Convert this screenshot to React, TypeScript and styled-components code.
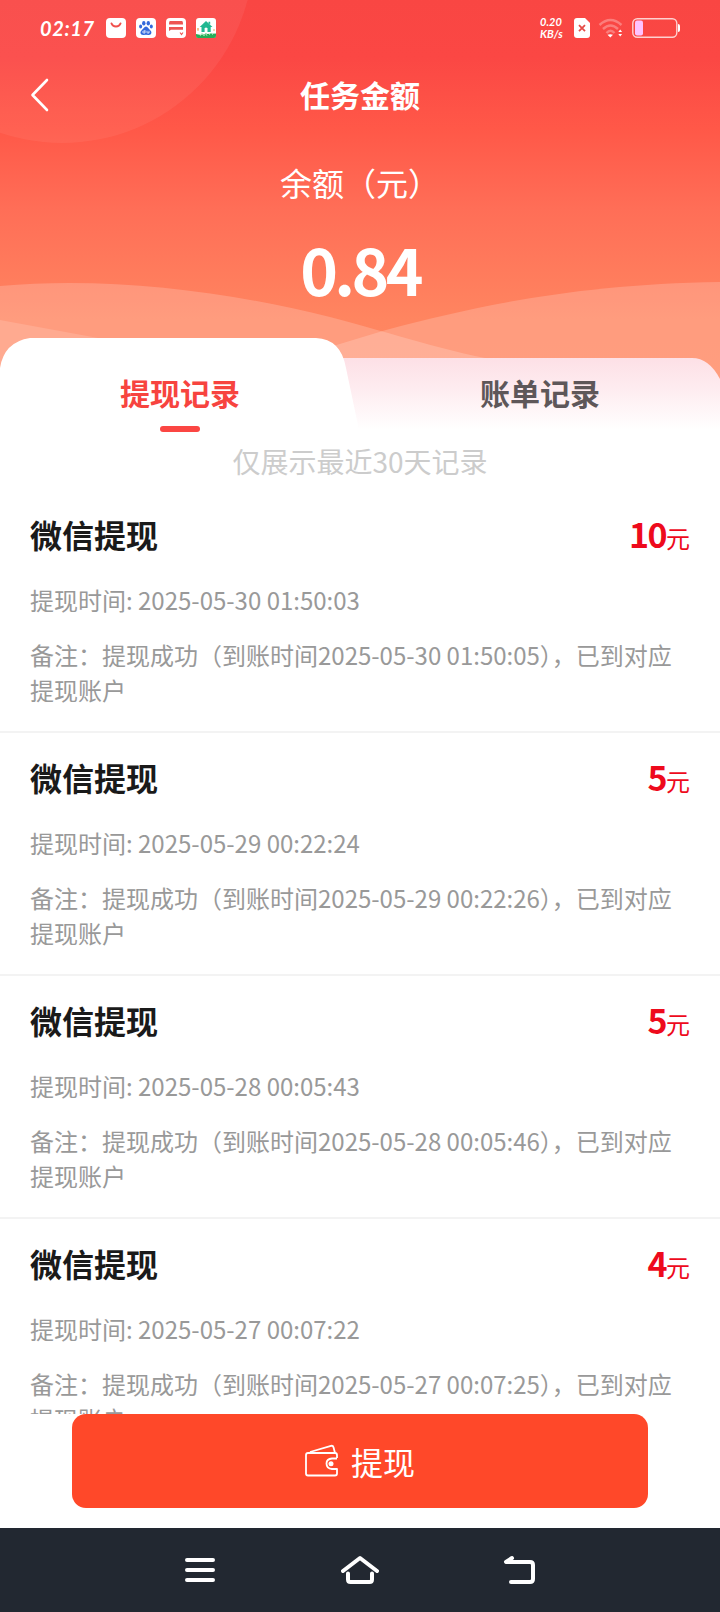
import React from "react";
import styled, { createGlobalStyle } from "styled-components";

const GlobalStyle = createGlobalStyle`
  * { box-sizing: border-box; }
  body {
    margin: 0;
    background: #fff;
    font-family: "Noto Sans CJK SC", sans-serif;
  }
`;

const Screen = styled.div`
  width: 720px;
  height: 1612px;
  display: flex;
  flex-direction: column;
  overflow: hidden;
  background: #fff;
`;

const Hero = styled.header`
  position: relative;
  isolation: isolate;
  height: 430px;
  flex: none;
  display: flex;
  flex-direction: column;
`;

const HeroArt = styled.svg`
  position: absolute;
  inset: 0;
  z-index: -1;
`;

const StatusBar = styled.div`
  height: 56px;
  padding: 0 40px;
  display: flex;
  justify-content: space-between;
  align-items: center;
  color: #fff;
`;

const StatusGroup = styled.div<{ $gap: number }>`
  display: flex;
  align-items: center;
  gap: ${(p) => p.$gap}px;
`;

const Clock = styled.span`
  width: 56px;
  font: italic 700 20px/24px Lato, sans-serif;
  letter-spacing: 0.6px;
  white-space: nowrap;
`;

const NetSpeed = styled.span`
  width: 26px;
  font: italic 700 11px/12px Lato, sans-serif;
  white-space: nowrap;
`;

const TitleBar = styled.div`
  height: 76px;
  padding: 0 28px;
  display: grid;
  grid-template-columns: 40px 1fr 40px;
  align-items: center;
`;

const BackButton = styled.button`
  border: 0;
  padding: 2px 0 0;
  height: 40px;
  background: none;
  display: flex;
  align-items: center;
`;

const PageTitle = styled.h1`
  margin: 0;
  text-align: center;
  color: #fff;
  font-size: 30px;
  line-height: 44px;
  font-weight: 700;
`;

const Balance = styled.div`
  flex: 1;
  padding-top: 26px;
  display: flex;
  flex-direction: column;
  align-items: center;
  color: #fff;
`;

const BalanceLabel = styled.div`
  font-size: 32px;
  line-height: 48px;
`;

const BalanceValue = styled.div`
  margin-top: 17px;
  font-size: 64px;
  line-height: 90px;
  font-weight: 700;
  letter-spacing: -3.6px;
  padding-right: 0;
`;

const Tabs = styled.div`
  height: 92px;
  display: grid;
  grid-template-columns: 1fr 1fr;
`;

const Tab = styled.button<{ $active?: boolean }>`
  border: 0;
  padding: 32px 0 0;
  background: none;
  display: flex;
  flex-direction: column;
  align-items: center;
  gap: 12px;
  font: 700 30px/44px "Noto Sans CJK SC", sans-serif;
  color: ${(p) => (p.$active ? "#f7443f" : "#5e5759")};

  &::after {
    content: "";
    width: 40px;
    height: 6px;
    border-radius: 3px;
    background: ${(p) => (p.$active ? "#fb4643" : "transparent")};
  }
`;

const Hint = styled.p`
  margin: 0;
  height: 60px;
  flex: none;
  padding-top: 10px;
  text-align: center;
  color: #ccc;
  font-size: 28px;
  line-height: 42px;
`;

const RecordList = styled.main`
  flex: 1;
  min-height: 0;
  overflow: hidden;
`;

const RecordRow = styled.article`
  height: 243px;
  padding: 20px 30px 0;
  border-bottom: 2px solid #f3f3f3;
`;

const RecordHead = styled.div`
  display: flex;
  justify-content: space-between;
  align-items: baseline;
  height: 48px;
  line-height: 48px;
`;

const RecordTitle = styled.h2`
  margin: 0;
  font-size: 32px;
  font-weight: 700;
  color: #1a1a1a;
`;

const Amount = styled.span`
  color: #ee0a1c;
  font-size: 24px;
`;

const AmountNumber = styled.strong`
  font-size: 34px;
  font-weight: 700;
  letter-spacing: -1.6px;
`;

const RecordText = styled.p<{ $top: number }>`
  margin: ${(p) => p.$top}px 0 0;
  color: #999;
  font-size: 24px;
  line-height: 35px;
`;

const Footer = styled.footer`
  height: 114px;
  flex: none;
  padding: 0 72px;
  background: #fff;
`;

const WithdrawButton = styled.button`
  width: 100%;
  height: 94px;
  border: 0;
  border-radius: 14px;
  background: #ff4829;
  color: #fff;
  font: 400 32px/48px "Noto Sans CJK SC", sans-serif;
  display: flex;
  align-items: center;
  justify-content: center;
  gap: 12px;
  padding: 0 0 1px;
`;

const NavBar = styled.nav`
  height: 84px;
  flex: none;
  background: #222831;
  display: grid;
  grid-template-columns: repeat(3, 160px);
  justify-content: center;
  align-items: center;
  justify-items: center;
`;

const HeaderArt = () => (
  <HeroArt width="720" height="430" viewBox="0 0 720 430">
    <defs>
      <linearGradient id="sky" x1="0" y1="0" x2="0" y2="380" gradientUnits="userSpaceOnUse">
        <stop offset="0" stopColor="#f94643" />
        <stop offset="0.15" stopColor="#fb4744" />
        <stop offset="0.34" stopColor="#ff5848" />
        <stop offset="0.55" stopColor="#ff6e57" />
        <stop offset="0.84" stopColor="#ff8560" />
        <stop offset="1" stopColor="#ff8862" />
      </linearGradient>
      <linearGradient id="idle" x1="0" y1="358" x2="0" y2="430" gradientUnits="userSpaceOnUse">
        <stop offset="0" stopColor="#fde0e6" />
        <stop offset="0.4" stopColor="#feebef" />
        <stop offset="1" stopColor="#ffffff" />
      </linearGradient>
    </defs>
    <rect width="720" height="380" fill="url(#sky)" />
    <circle cx="62" cy="-49" r="192" fill="#fff" fillOpacity="0.06" />
    <path d="M0 286C110 276 230 292 330 317C400 335 450 354 520 364V380H0Z" fill="#fff" fillOpacity="0.19" />
    <path d="M720 282C580 284 480 305 386 330L320 350V380H720Z" fill="#fff" fillOpacity="0.19" />
    <path d="M0 320L120 342V380H0Z" fill="#fff" fillOpacity="0.14" />
    <path d="M320 358H692Q709 358 720 379V430H320Z" fill="url(#idle)" />
    <path d="M0 430V368Q4 342 30 338H316Q341 339 346 368L359 430Z" fill="#fff" />
  </HeroArt>
);

const MailBadge = () => (
  <svg width="20" height="20" viewBox="0 0 20 20">
    <rect width="20" height="20" rx="4" fill="#fff" />
    <path d="M5.5 5.5C7 9.5 13 9.5 14.5 5.5" fill="none" stroke="#f0504c" strokeWidth="2" strokeLinecap="round" />
  </svg>
);

const PawBadge = () => (
  <svg width="20" height="20" viewBox="0 0 20 20">
    <rect width="20" height="20" rx="4" fill="#fff" />
    <g fill="#3369db">
      <ellipse cx="7.8" cy="5.2" rx="1.7" ry="2.3" />
      <ellipse cx="12.3" cy="5.2" rx="1.7" ry="2.3" />
      <ellipse cx="4.6" cy="8.5" rx="1.5" ry="2" />
      <ellipse cx="15.3" cy="8.5" rx="1.5" ry="2" />
      <path d="M10 8.5C12 8.5 12.5 11 14.2 12.2C16.5 14 15.3 17.2 12.5 16.9Q10 16.4 7.5 16.9C4.5 17.2 3.4 14 5.7 12.2C7.5 11 8 8.5 10 8.5Z" />
    </g>
    <path d="M9 12.2V15H7.8Q6.6 14.9 6.6 13.8Q6.7 12.9 9 13M11 12.8V14.5Q11 15 11.7 15H13V12.8" fill="none" stroke="#fff" strokeWidth="0.8" />
  </svg>
);

const CardBadge = () => (
  <svg width="20" height="20" viewBox="0 0 20 20">
    <rect width="20" height="20" rx="4" fill="#fff" />
    <path d="M4 3H16Q17 3 17 6.5H3Q3 3 4 3ZM3 9H17V11.8H5L3 13Z" fill="#ee5552" />
    <path d="M14 14.5L15.5 16.5L17 14.5" fill="none" stroke="#ee5552" strokeWidth="1.1" />
  </svg>
);

const HouseBadge = () => (
  <svg width="20" height="20" viewBox="0 0 20 20">
    <rect width="20" height="20" rx="3" fill="#fff" />
    <path d="M0 16L5 17L10 16L20 15.500V18Q20 20 18 20H2Q0 20 0 18Z" fill="#27ad59" />
    <path d="M10 3L16.5 9H14.7V14H5.5V9H3.7ZM12.5 3.7H14.2V6.5L12.5 5Z" fill="#20b892" />
    <path d="M8.6 14V10.5Q10 8.5 11.5 10.5V14Z" fill="#fff" />
    <path d="M4 18L6 15.5L8 18L10 15L11 18M13 17L15 15L17 17" fill="none" stroke="#8fdca6" strokeWidth="1" />
    <path d="M1 11H3M2 10V13M17 12H19" stroke="#f3aa68" />
  </svg>
);

const StatusIcons = () => (
  <>
    <svg width="16" height="20" viewBox="0 0 16 20">
      <path d="M3 0H11L16 5V17Q16 20 13 20H3Q0 20 0 17V3Q0 0 3 0Z" fill="#fff" />
      <path d="M5 7.2L11 13.2M11 7.2L5 13.2" stroke="#e64c48" strokeWidth="1.8" />
    </svg>
    <svg width="26" height="20" viewBox="0 0 26 20">
      <g fill="none" stroke="#fff" strokeOpacity="0.3" strokeWidth="2.4">
        <path d="M1.5 7Q12.5 -3 23.5 7" />
        <path d="M5 11Q12.5 4 20 11" />
        <path d="M8.5 15Q12.5 10.5 16.5 15" />
      </g>
      <path d="M9.5 16.8Q12.3 15.500 15 16.8L12.3 19.500ZM20.300 14L22.2 11.500L24.1 14ZM20.300 16L22.2 18.500L24.1 16Z" fill="#fff" />
    </svg>
    <svg width="48" height="20" viewBox="0 0 48 20">
      <rect x="0.8" y="0.8" width="44" height="18.4" rx="4.5" fill="none" stroke="#fff" strokeOpacity="0.75" strokeWidth="1.4" />
      <rect x="3" y="2.5" width="8" height="15" rx="2" fill="#ffc2ff" />
      <path d="M46 6Q48 6 48 8V12Q48 14 46 14Z" fill="#fff" />
    </svg>
  </>
);

const BackChevron = () => (
  <svg width="24" height="34" viewBox="0 0 24 34">
    <path d="M19 2L4.5 17L19 32" fill="none" stroke="#fff" strokeWidth="2.6" strokeLinecap="round" strokeLinejoin="round" />
  </svg>
);

const WalletIcon = () => (
  <svg width="34" height="34" viewBox="0 0 34 34" fill="none" stroke="#fff" strokeWidth="1.8" strokeLinejoin="round">
    <path d="M32 14V11Q32 9 30 9H3Q1 9 1 11V29.500Q1 31.500 3 31.500H30Q32 31.500 32 29.500V25H27Q21.500 24.500 21.500 19.500Q21.500 15 27 14.500H32" />
    <path d="M5 8L26 1.800Q28 1.400 28.500 3.200L30 9" />
    <circle cx="26" cy="19.700" r="2.500" fill="#fff" stroke="none" />
  </svg>
);

const MenuIcon = () => (
  <svg width="30" height="26" viewBox="0 0 30 26">
    <path d="M2 3H28M2 13H28M2 23H28" stroke="#fff" strokeWidth="4" strokeLinecap="round" />
  </svg>
);

const HomeIcon = () => (
  <svg width="38" height="30" viewBox="0 0 38 30" fill="none" stroke="#fff" strokeWidth="4" strokeLinecap="round" strokeLinejoin="round">
    <path d="M2 16L19 3L36 16" />
    <path d="M7 18.500V24.500Q7 27 9.500 27H28.500Q31 27 31 24.500V18.500" />
  </svg>
);

const ReturnIcon = () => (
  <svg width="36" height="30" viewBox="0 0 36 30" fill="none" stroke="#fff" strokeWidth="4" strokeLinecap="round" strokeLinejoin="round">
    <path d="M10 3L4 7H28Q31 7 31 10V24Q31 27 28 27H9" />
  </svg>
);

const records = [
  { amount: 10, time: "2025-05-30 01:50:03", arrived: "2025-05-30 01:50:05" },
  { amount: 5, time: "2025-05-29 00:22:24", arrived: "2025-05-29 00:22:26" },
  { amount: 5, time: "2025-05-28 00:05:43", arrived: "2025-05-28 00:05:46" },
  { amount: 4, time: "2025-05-27 00:07:22", arrived: "2025-05-27 00:07:25" },
];

export default function App() {
  return (
    <Screen lang="zh-CN">
      <GlobalStyle />
      <Hero>
        <HeaderArt />
        <StatusBar>
          <StatusGroup $gap={10}>
            <Clock>02:17</Clock>
            <MailBadge />
            <PawBadge />
            <CardBadge />
            <HouseBadge />
          </StatusGroup>
          <StatusGroup $gap={8}>
            <NetSpeed>
              0.20
              <br />
              KB/s
            </NetSpeed>
            <StatusIcons />
          </StatusGroup>
        </StatusBar>
        <TitleBar>
          <BackButton aria-label="返回">
            <BackChevron />
          </BackButton>
          <PageTitle>任务金额</PageTitle>
        </TitleBar>
        <Balance>
          <BalanceLabel>余额（元）</BalanceLabel>
          <BalanceValue>0.84</BalanceValue>
        </Balance>
        <Tabs>
          <Tab $active>提现记录</Tab>
          <Tab>账单记录</Tab>
        </Tabs>
      </Hero>
      <Hint>仅展示最近30天记录</Hint>
      <RecordList>
        {records.map((r) => (
          <RecordRow key={r.time}>
            <RecordHead>
              <RecordTitle>微信提现</RecordTitle>
              <Amount>
                <AmountNumber>{r.amount}</AmountNumber>元
              </Amount>
            </RecordHead>
            <RecordText $top={24}>{`提现时间: ${r.time}`}</RecordText>
            <RecordText $top={20}>
              {`备注：提现成功（到账时间${r.arrived}），已到对应提现账户`}
            </RecordText>
          </RecordRow>
        ))}
      </RecordList>
      <Footer>
        <WithdrawButton>
          <WalletIcon />
          提现
        </WithdrawButton>
      </Footer>
      <NavBar>
        <MenuIcon />
        <HomeIcon />
        <ReturnIcon />
      </NavBar>
    </Screen>
  );
}
